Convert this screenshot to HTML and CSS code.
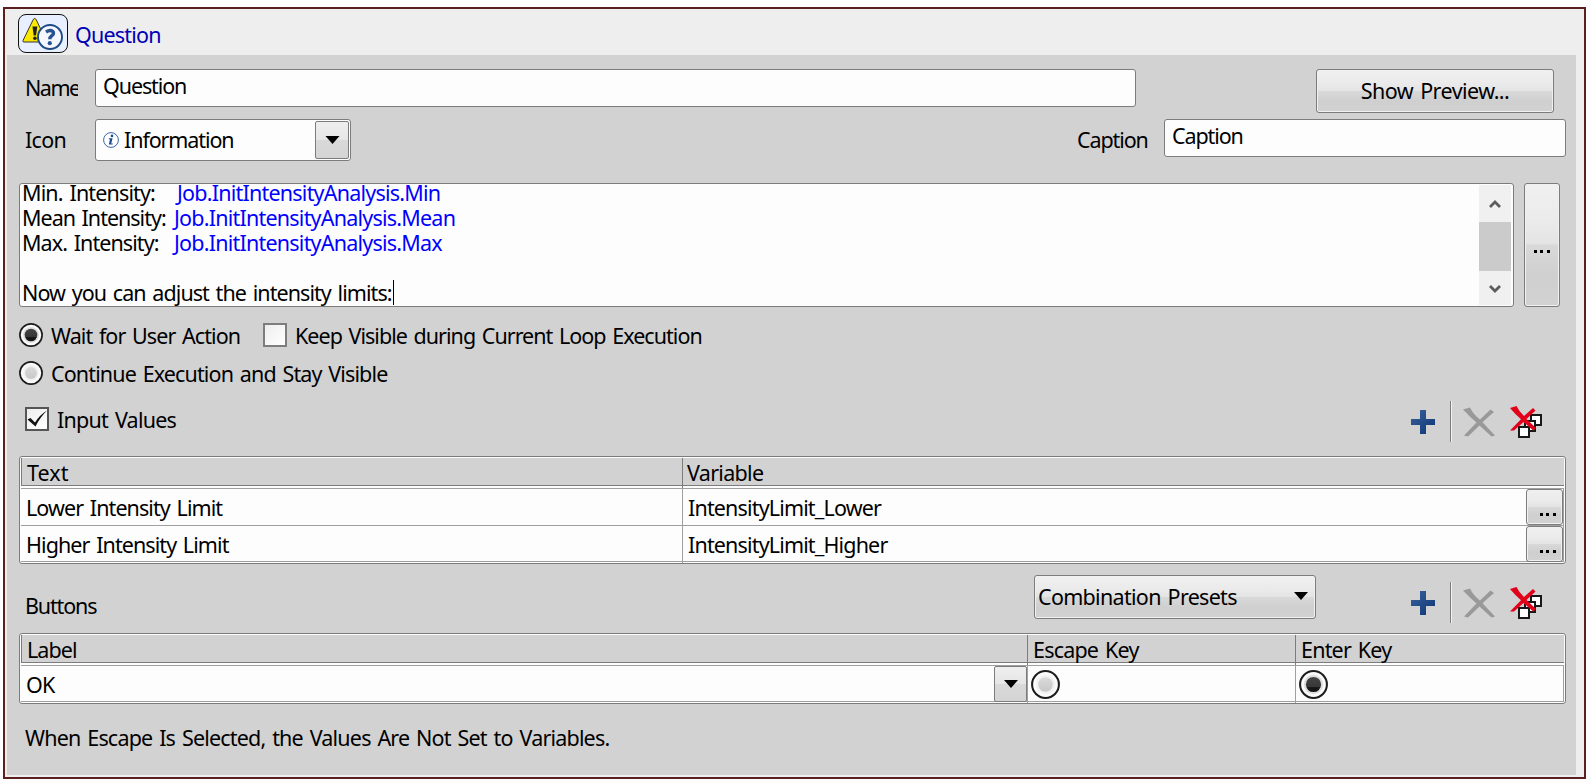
FILE: index.html
```
<!DOCTYPE html>
<html lang="en">
<head>
<meta charset="utf-8">
<title>Question</title>
<link rel="stylesheet" href="styles.css">
</head>
<body>
<svg class="defs" width="0" height="0">
  <defs>
    <linearGradient id="blue" x1="0" y1="0" x2="1" y2="1"><stop offset="0" stop-color="#3a639c"/><stop offset="1" stop-color="#0b3474"/></linearGradient>
    <linearGradient id="yellow" x1="0" y1="0" x2="1" y2="1"><stop offset="0" stop-color="#fff200"/><stop offset="1" stop-color="#f4dc00"/></linearGradient>
    <linearGradient id="dot" x1="0" y1="0" x2="0" y2="1"><stop offset="0" stop-color="#444"/><stop offset=".65" stop-color="#383838"/><stop offset=".7" stop-color="#161616"/><stop offset="1" stop-color="#161616"/></linearGradient>
    <linearGradient id="dim" x1="0" y1="0" x2="0" y2="1"><stop offset="0" stop-color="#dadada"/><stop offset="1" stop-color="#c8c8c8"/></linearGradient>
    <symbol id="radio-on" viewBox="0 0 24 24"><circle cx="12" cy="12" r="11.100" fill="#fbfbfb" stroke="#1c1c1c" stroke-width="1.700"/><circle cx="12" cy="12" r="8" fill="#dedede"/><circle cx="12" cy="12" r="6.300" fill="url(#dot)"/></symbol>
    <symbol id="radio-off" viewBox="0 0 24 24"><circle cx="12" cy="12" r="11.100" fill="#fbfbfb" stroke="#1c1c1c" stroke-width="1.700"/><circle cx="12" cy="12" r="8" fill="#f1f1f1"/><circle cx="12" cy="12" r="6" fill="url(#dim)"/></symbol>
    <symbol id="plus" viewBox="0 0 24 24"><path d="M9 0h6v9h9v6h-9v9H9v-9H0V9h9z" fill="url(#blue)"/></symbol>
    <symbol id="cross" viewBox="0 0 32 30"><path d="M0 2.500 7 .5Q10 7 17 12.500L27.500 2.500 31 5Q25 10 19.500 15.200L32 28.500 28.500 29.500 16.500 18.500 5 29.500 1 28.500 13.500 15.500Q7 10 0 2.500z" fill="#999"/></symbol>
    <symbol id="cross-all" viewBox="0 0 32 32"><g fill="#fff" stroke="#181818" stroke-width="2"><rect x="21" y="9" width="10" height="10"/><rect x="15" y="15" width="10" height="10"/><rect x="9" y="21" width="10" height="10"/></g><path d="M0 2 6.500 0Q9 5.500 14 10L23 2 25.500 4.500 16.500 13 26 22 23.500 24.800 13.500 16 4 24.500H0L11 13.300Q5 8 0 2z" fill="#e2001a"/></symbol>
    <symbol id="down" viewBox="0 0 14 8"><path d="M0 0h14L7 8z" fill="#000"/></symbol>
  </defs>
</svg>
<div class="frame">
  <header class="head">
    <svg class="head-icon" viewBox="0 0 50 39">
      <rect x=".5" y=".5" width="49" height="38" rx="7.500" fill="#e8f0ff" stroke="#111"/>
      <path d="M5 26.500 15 6q1.700-3.200 3.400 0L28 26.500q.5 1.500-1 1.500H6q-1.500 0-1-1.500z" fill="url(#yellow)" stroke="#333" stroke-width="1"/>
      <path d="M14.500 12.500h4.800L18 21.500h-2.300z" fill="#222"/><circle cx="16.900" cy="24.300" r="1.800" fill="#222"/>
      <circle cx="32" cy="23" r="12" fill="#f4f7ff" stroke="#1d4a88" stroke-width="1.900"/>
      <path d="M28 18q4-2.600 6.600-.7 2.200 2.300-1 4.600-1.800 1.400-1.800 3.300" fill="none" stroke="#2a5391" stroke-width="3.400"/><circle cx="31.800" cy="29.200" r="2.100" fill="#2a5391"/>
    </svg>
    <h1 class="title">Question</h1>
  </header>
  <main class="panel">
    <section class="line name-line">
      <label class="lbl lbl-name">Name</label>
      <div class="input name-input"><span class="w-input">Question</span></div>
      <button class="btn preview">Show Preview...</button>
    </section>
    <section class="line icon-line">
      <label class="lbl lbl-icon">Icon</label>
      <div class="combo">
        <svg class="info" viewBox="0 0 16 16"><circle cx="8" cy="8" r="7.400" fill="#fff" stroke="#3a68a8" stroke-width="1"/><circle cx="9" cy="3.900" r="1.300" fill="#1d4a90"/><path d="M6 6.300h3.600L8.200 11.600h1.600l-.3 1H5.800L7 7.300H5.700z" fill="#1d4a90"/></svg>
        <span class="w-info">Information</span>
        <span class="arrow-btn"><svg width="15" height="8"><use href="#down"/></svg></span>
      </div>
      <label class="lbl lbl-caption">Caption</label>
      <div class="input caption-input"><span class="w-caption">Caption</span></div>
    </section>
    <section class="message">
      <div class="textarea">
        <div class="copy">
          <div class="row"><span class="key w-min">Min. Intensity:</span><span class="var var-min">Job.InitIntensityAnalysis.Min</span></div>
          <div class="row"><span class="key w-mean">Mean Intensity:</span><span class="var">Job.InitIntensityAnalysis.Mean</span></div>
          <div class="row"><span class="key w-max">Max. Intensity:</span><span class="var">Job.InitIntensityAnalysis.Max</span></div>
          <div class="row"></div>
          <div class="row"><span class="w-now">Now you can adjust the intensity limits:</span><i class="caret"></i></div>
        </div>
        <div class="scroll">
          <svg width="12" height="10" viewBox="0 0 12 10"><path d="M1 8 6 3l5 5" fill="none" stroke="#5c5c5c" stroke-width="2.800"/></svg>
          <div class="thumb"></div>
          <svg width="12" height="10" viewBox="0 0 12 10"><path d="M1 2 6 7l5-5" fill="none" stroke="#5c5c5c" stroke-width="2.800"/></svg>
        </div>
      </div>
      <button class="btn more"><i class="dots"></i></button>
    </section>
    <section class="choice first">
      <svg class="radio"><use href="#radio-on"/></svg><span class="choice-text w-wait">Wait for User Action</span>
      <span class="check keep"></span><span class="choice-text w-keep">Keep Visible during Current Loop Execution</span>
    </section>
    <section class="choice second">
      <svg class="radio"><use href="#radio-off"/></svg><span class="choice-text w-cont">Continue Execution and Stay Visible</span>
    </section>
    <section class="bar bar-values">
      <span class="check"><svg width="22" height="22" viewBox="0 0 22 22"><path d="M1.500 11.500 4.500 10l4.500 4.500Q13 7.500 21 2.500 13.500 10 9.500 18.500z" fill="#111"/></svg></span>
      <span class="bar-text">Input Values</span>
      <div class="tools"><svg class="plus"><use href="#plus"/></svg><i class="sep"></i><svg class="cross"><use href="#cross"/></svg><svg class="all"><use href="#cross-all"/></svg></div>
    </section>
    <section class="table values">
      <div class="th"><span class="w-text">Text</span><span class="w-variable">Variable</span></div>
      <div class="td"><span>Lower Intensity Limit</span><span>IntensityLimit_Lower</span><button class="btn cell-btn"><i class="dots"></i></button></div>
      <div class="td"><span>Higher Intensity Limit</span><span>IntensityLimit_Higher</span><button class="btn cell-btn"><i class="dots"></i></button></div>
    </section>
    <section class="bar bar-buttons">
      <span class="buttons-text">Buttons</span>
      <button class="btn presets"><span>Combination Presets</span><svg width="14" height="8"><use href="#down"/></svg></button>
      <div class="tools"><svg class="plus"><use href="#plus"/></svg><i class="sep"></i><svg class="cross"><use href="#cross"/></svg><svg class="all"><use href="#cross-all"/></svg></div>
    </section>
    <section class="table keys">
      <div class="th"><span>Label</span><span class="w-key">Escape Key</span><span class="w-key">Enter Key</span></div>
      <div class="td"><span class="w-ok">OK</span><span class="arrow-btn cell-arrow"><svg width="14" height="8"><use href="#down"/></svg></span><span class="rc"><svg class="big-radio"><use href="#radio-off"/></svg></span><span class="rc"><svg class="big-radio"><use href="#radio-on"/></svg></span></div>
    </section>
    <p class="note">When Escape Is Selected, the Values Are Not Set to Variables.</p>
  </main>
</div>
</body>
</html>
```
FILE: styles.css
```
* { box-sizing: border-box; }
body { margin: 0; background: #fdfdfd; color: #000; font: 21.5px/30px "Noto Sans", Tahoma, sans-serif; letter-spacing: -.92px; word-spacing: 2px; white-space: nowrap; overflow: hidden; }
svg { display: block; flex: none; }
.defs { position: absolute; }
.frame { width: 1583px; height: 772px; margin: 7px 0 0 3px; border: 2px solid #5a2020; background: #eee; padding-left: 2px; }
.head { display: flex; height: 46px; padding: 5px 0 0 11px; }
.head-icon { width: 50px; height: 39px; }
.title { margin: 6px 0 0 7px; font: inherit; color: #0000b4; letter-spacing: -.8px; }
.panel { width: 1569px; height: 720px; background: #d2d2d2; padding: 14px 0 0 12px; display: flex; flex-direction: column; }

.btn { font: inherit; letter-spacing: inherit; word-spacing: inherit; color: #000; padding: 0; border: 1px solid #7c7c7c; border-radius: 3px; background: linear-gradient(#f0f0f0, #ebebeb 30%, #e4e4e4 49%, #d9d9d9 50%, #cfcfcf 75%, #d2d2d2); box-shadow: inset 0 0 0 1px #f1f1f1; display: flex; align-items: center; justify-content: center; flex: none; }
.input, .combo { background: #fdfdfd; border: 1px solid #7c7c7c; border-radius: 3px; flex: none; }
.input { height: 38px; padding: 0 7px; line-height: 31px; }
.lbl { flex: none; overflow: hidden; }
.line { display: flex; align-items: flex-start; height: 50px; }
.name-line { padding-left: 6px; }
.lbl-name { width: 53px; margin: 4px 17px 0 0; letter-spacing: -1.5px; }
.name-input { width: 1041px; }
.w-input { letter-spacing: -1.1px; }
.preview { width: 238px; height: 44px; margin-left: 180px; letter-spacing: -.55px; }
.icon-line { padding-left: 6px; }
.lbl-icon { width: 52px; margin: 6px 18px 0 0; letter-spacing: -.7px; }
.combo { width: 256px; height: 42px; display: flex; align-items: center; padding: 0 1px 0 7px; }
.info { width: 16px; height: 16px; margin-right: 5px; }
.w-info { letter-spacing: -1.1px; flex: 1; }
.arrow-btn { width: 34px; height: 38px; border: 1px solid #7c7c7c; border-radius: 2px; background: linear-gradient(#efefef, #e6e6e6 49%, #d9d9d9 50%, #d4d4d4); display: flex; align-items: center; justify-content: center; flex: none; }
.lbl-caption { width: 74px; margin: 6px 13px 0 726px; letter-spacing: -1.1px; }
.caption-input { width: 402px; }
.w-caption { letter-spacing: -1.1px; }

.message { display: flex; height: 124px; margin-top: 14px; }
.textarea { width: 1495px; border: 1px solid #7c7c7c; border-radius: 3px; background: #fdfdfd; padding: 1px 2px 1px 2px; display: flex; justify-content: space-between; }
.copy { line-height: 25px; margin-top: -5px; }
.row { height: 25px; display: flex; }
.key { width: 152px; }
.w-min { width: 155px; letter-spacing: -.85px; }
.w-mean { letter-spacing: -1px; }
.w-max { letter-spacing: -.92px; }
.var { color: #00f; letter-spacing: -.78px; }
.w-now { letter-spacing: -.93px; }
.caret { width: 1px; height: 25px; margin-left: 1px; background: #000; }
.scroll { width: 32px; background: #f0f0f0; display: flex; flex-direction: column; align-items: center; padding: 14px 0 11px; justify-content: space-between; }
.thumb { width: 32px; height: 49px; background: #cbcbcb; }
.more { width: 36px; height: 124px; margin-left: 10px; padding-top: 13px; }
.dots { width: 16px; height: 3px; background: linear-gradient(90deg, #000 3px, transparent 3px 6.500px, #000 6.500px 9.500px, transparent 9.500px 13px, #000 13px); }

.choice { display: flex; align-items: center; height: 24px; }
.first { margin-top: 16px; }
.second { margin-top: 14px; }
.radio { width: 24px; height: 24px; margin-right: 8px; }
.choice-text { margin-top: 2px; flex: none; }
.w-wait { letter-spacing: -.93px; width: 212px; }
.w-keep { letter-spacing: -.97px; margin-left: -1px; }
.w-cont { letter-spacing: -.87px; }
.check { width: 24px; height: 24px; border: 2px solid #555; background: linear-gradient(135deg, #eee, #fff); flex: none; margin-right: 9px; }
.check svg { margin: -1px; }
.keep { border-color: #7d7d7d; }

.bar { display: flex; align-items: center; height: 71px; }
.bar-values { padding-left: 6px; }
.bar-text { letter-spacing: -.76px; margin: -2px 0 0 -1px; }
.bar .check { margin-top: -3px; }
.tools { display: flex; align-items: center; margin: 2px 34px 0 auto; }
.plus { width: 24px; height: 24px; margin-right: 15px; }
.sep { width: 2px; height: 41px; background: linear-gradient(90deg, #7c7c7c 1px, #f2f2f2 1px); }
.cross { width: 32px; height: 30px; margin: 0 15px 0 11px; }
.all { width: 32px; height: 32px; }

.table { width: 1547px; border: 1px solid #7c7c7c; border-radius: 3px; background: #fdfdfd; padding: 1px; }
.th { display: grid; height: 28px; border: solid #7c7c7c; border-width: 0 0 1px 1px; background: #d2d2d2; margin-bottom: 2px; }
.th span { padding-left: 5px; line-height: 30px; }
.th span + span { border-left: 1px solid #7c7c7c; }
.td { display: grid; height: 37px; border-top: 1px solid #a0a0a0; border-right: 1px solid #a0a0a0; line-height: 37px; }
.td:last-child { border-bottom: 1px solid #a0a0a0; }
.td span { padding-left: 5px; }
.values .th, .values .td { grid-template-columns: 660px 1fr; }
.values .td { grid-template-columns: 661px 1fr 37px; }
.values .td span + span { border-left: 1px solid #a0a0a0; letter-spacing: -.84px; }
.values .w-text { letter-spacing: .1px; }
.values .w-variable { letter-spacing: -.7px; padding-left: 4px; }
.cell-btn { height: 36px; padding: 15px 0 0 7px; }

.bar-buttons { height: 69px; padding-left: 6px; }
.buttons-text { width: 1009px; letter-spacing: -1.15px; margin-top: 15px; }
.presets { width: 282px; height: 44px; justify-content: space-between; padding: 0 7px 0 3px; margin-top: -4px; letter-spacing: -.7px; }
.presets svg { margin-top: -2px; }
.bar-buttons .tools { margin-top: 8px; }
.keys { height: 71px; }
.keys .th { grid-template-columns: 1005px 268px 1fr; }
.keys .td { grid-template-columns: 973px 33px 268px 1fr; }
.w-key { letter-spacing: -.8px; }
.w-ok { letter-spacing: -.9px; }
.td .cell-arrow { width: 33px; height: 36px; padding: 0; }
.td .rc { border-left: 1px solid #a0a0a0; padding: 4px 0 0 3px; }
.big-radio { width: 29px; height: 29px; }
.note { margin: 19px 0 0 6px; letter-spacing: -.81px; }
```
